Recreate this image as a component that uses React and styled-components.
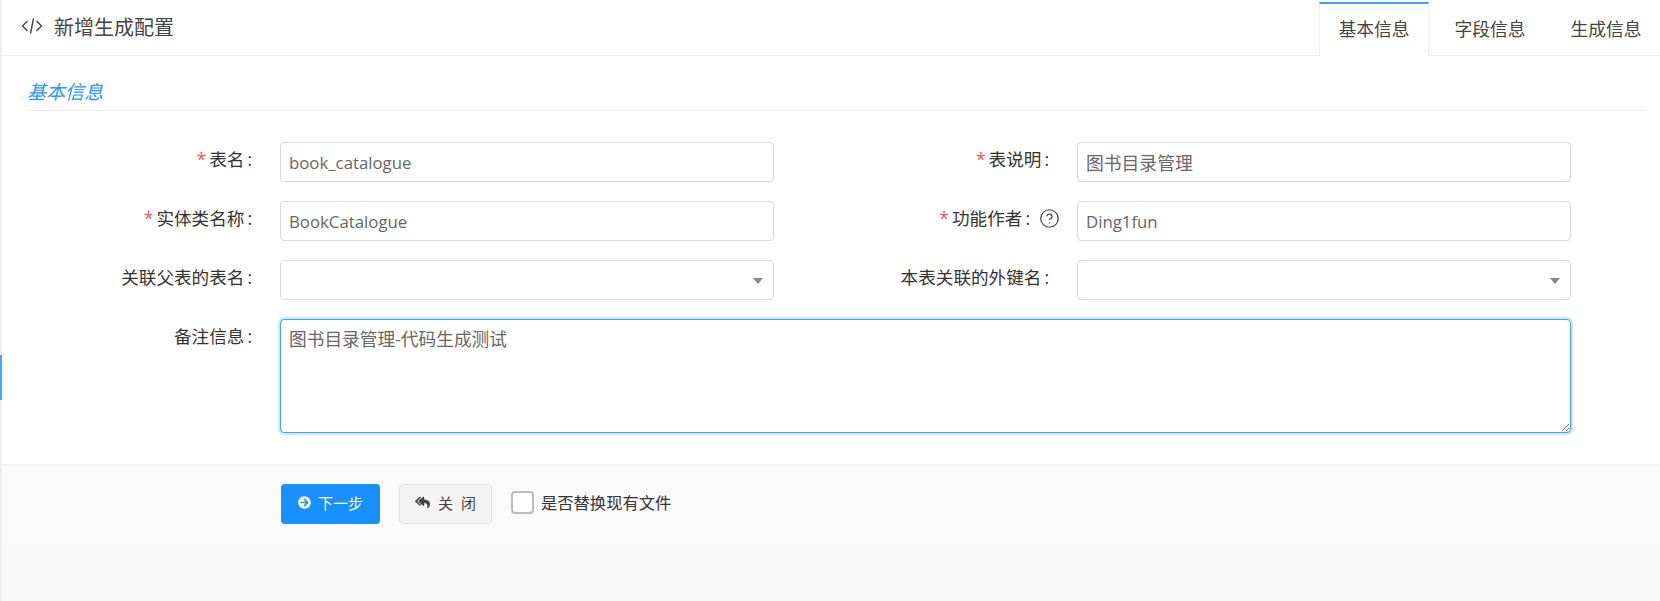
import styled, { createGlobalStyle } from "styled-components"
import { FaArrowCircleRight, FaReplyAll } from "react-icons/fa"
import { CircleHelp } from "lucide-react"

const FONT = `"Open Sans", "Noto Sans CJK SC", sans-serif`

const GlobalStyle = createGlobalStyle`
    html, body {
        margin: 0;
        padding: 0;
        background: #f8f8f8;
        overflow: hidden;
    }
    * {
        box-sizing: border-box;
    }
`

export default function App() {
    return (
        <Page>
            <GlobalStyle />
            <SideMark />
            <Header>
                <Title>
                    <svg width="22" height="18" viewBox="0 0 22 18" fill="none" stroke="#444" strokeWidth="1.4">
                        <path d="M6.5 4 1.5 9l5 5M15.5 4l5 5-5 5M12.5 1.5 9.5 16.5" />
                    </svg>
                    <span>新增生成配置</span>
                </Title>
                <Tabs>
                    <Tab $active>基本信息</Tab>
                    <Tab>字段信息</Tab>
                    <Tab>生成信息</Tab>
                </Tabs>
            </Header>
            <Body>
                <SectionTitle>基本信息</SectionTitle>
                <FormGrid>
                    <Label><Star>*</Star>表名<Colon>:</Colon></Label>
                    <Input $latin defaultValue="book_catalogue" />
                    <Label><Star>*</Star>表说明<Colon>:</Colon></Label>
                    <Input defaultValue="图书目录管理" />

                    <Label><Star>*</Star>实体类名称<Colon>:</Colon></Label>
                    <Input $latin defaultValue="BookCatalogue" />
                    <Label $help><Star>*</Star>功能作者<Colon>:</Colon><HelpIcon size={21} strokeWidth={1.4} /></Label>
                    <Input $latin defaultValue="Ding1fun" />

                    <Label>关联父表的表名<Colon>:</Colon></Label>
                    <Select />
                    <Label>本表关联的外键名<Colon>:</Colon></Label>
                    <Select />

                    <Label>备注信息<Colon>:</Colon></Label>
                    <Textarea defaultValue="图书目录管理-代码生成测试" />
                </FormGrid>
            </Body>
            <Footer>
                <PrimaryButton><FaArrowCircleRight size={13} />下一步</PrimaryButton>
                <CloseButton><FaReplyAll size={15} />关 闭</CloseButton>
                <CheckLabel>
                    <CheckBox />
                    是否替换现有文件
                </CheckLabel>
            </Footer>
        </Page>
    )
}

const Page = styled.div`
    position: relative;
    width: 1660px;
    height: 601px;
    background: #f8f8f8;
    border-left: 2px solid #eeeeee;
    font-family: ${FONT};
    color: #333;
`

const SideMark = styled.div`
    position: absolute;
    left: -2px;
    top: 355px;
    width: 2px;
    height: 45px;
    background: #4aa5ff;
`

const Header = styled.div`
    height: 56px;
    background: #fff;
    border-bottom: 1px solid #eeeeee;
    display: flex;
    justify-content: space-between;
    align-items: flex-end;
    padding-left: 19px;
`

const Title = styled.div`
    align-self: flex-start;
    height: 52px;
    display: flex;
    align-items: center;
    gap: 11px;
    font-size: 20px;
    color: #444;
`

const Tabs = styled.div`
    display: flex;
    gap: 6px;
    margin-right: -1px;
`

const Tab = styled.div`
    width: 110px;
    height: 54px;
    margin-bottom: -1px;
    display: flex;
    align-items: center;
    justify-content: center;
    padding-bottom: 4px;
    font-size: 17.8px;
    color: #444;
    background: ${p => (p.$active ? "#fff" : "transparent")};
    border-top: 2px solid ${p => (p.$active ? "#3f9dfb" : "transparent")};
    border-left: 1px solid ${p => (p.$active ? "#eeeeee" : "transparent")};
    border-right: 1px solid ${p => (p.$active ? "#eeeeee" : "transparent")};
`

const Body = styled.div`
    height: 408px;
    background: #fff;
    padding: 0 14px 0 25px;
`

const SectionTitle = styled.div`
    height: 55px;
    padding-top: 23px;
    border-bottom: 1px solid #eeeeee;
    font-size: 19px;
    line-height: 26px;
    font-style: italic;
    color: #2d96f7;
`

const FormGrid = styled.div`
    display: grid;
    grid-template-columns: 253px 494px 303px 494px;
    grid-auto-rows: 40px 40px 40px 114px;
    row-gap: 19px;
    margin-top: 31px;
`

const Label = styled.label`
    display: flex;
    justify-content: flex-end;
    align-items: flex-start;
    padding-right: ${p => (p.$help ? "17px" : "28px")};
    font-size: 17.6px;
    line-height: 34px;
    color: #333;
`

const Star = styled.span`
    color: #ed5565;
    margin-right: 3px;
`

const Colon = styled.span`
    margin-left: 3px;
`

const HelpIcon = styled(CircleHelp)`
    margin: 7px 0 0 9px;
    color: #444;
`

const Input = styled.input`
    width: 100%;
    height: 40px;
    padding: 0 8px;
    font-family: ${FONT};
    font-size: ${p => (p.$latin ? "16.8px" : "17.8px")};
    color: #666;
    background: #fff;
    border: 1px solid #d9d9d9;
    border-radius: 4px;
    outline: none;
`

const Select = styled.div`
    position: relative;
    height: 40px;
    background: #fff;
    border: 1px solid #d9d9d9;
    border-radius: 4px;

    &::after {
        content: "";
        position: absolute;
        right: 10px;
        top: 17px;
        border-left: 5.5px solid transparent;
        border-right: 5.5px solid transparent;
        border-top: 6px solid #888;
    }
`

const Textarea = styled.textarea`
    grid-column: 2 / 5;
    height: 114px;
    padding: 7px 8px;
    font-family: ${FONT};
    font-size: 17.7px;
    line-height: 24px;
    color: #666;
    background: #fff;
    border: 1px solid #3fa2fb;
    border-radius: 4px;
    outline: none;
    box-shadow: 0 0 0 2px #cfe7ff;
`

const Footer = styled.div`
    height: 80px;
    background: #fafafa;
    border-top: 1px solid #f2f2f2;
    display: flex;
    align-items: flex-start;
    padding: 19px 0 0 279px;
`

const PrimaryButton = styled.button`
    width: 99px;
    height: 40px;
    padding: 0 0 3px;
    display: flex;
    align-items: center;
    justify-content: center;
    gap: 7px;
    font-family: ${FONT};
    font-size: 15px;
    color: #fff;
    background: #1890ff;
    border: none;
    border-radius: 4px;
`

const CloseButton = styled.button`
    width: 93px;
    height: 40px;
    margin-left: 19px;
    padding: 0 0 3px;
    display: flex;
    align-items: center;
    justify-content: center;
    gap: 8px;
    font-family: ${FONT};
    font-size: 15px;
    word-spacing: 4px;
    color: #444;
    background: #f3f3f3;
    border: 1px solid #e1e1e1;
    border-radius: 4px;
`

const CheckLabel = styled.label`
    display: flex;
    align-items: center;
    height: 36px;
    margin-left: 19px;
    gap: 7px;
    font-size: 16.3px;
    color: #333;
`

const CheckBox = styled.span`
    width: 23px;
    height: 23px;
    background: #fff;
    border: 2px solid #bbbbbb;
    border-radius: 4px;
`
